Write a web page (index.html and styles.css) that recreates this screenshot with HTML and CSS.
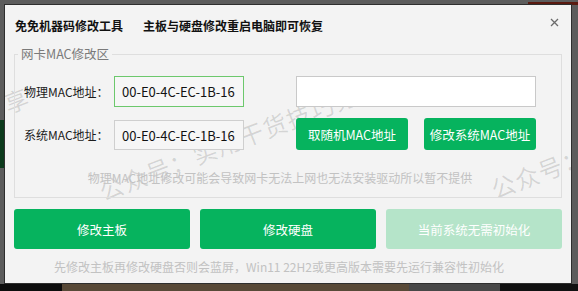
FILE: index.html
```html
<!DOCTYPE html>
<html lang="zh-CN">
<head>
    <meta charset="UTF-8">
    <meta name="viewport" content="width=device-width, initial-scale=1.0">
    <title>免免机器码修改工具</title>
    <link rel="stylesheet" href="styles.css">
</head>
<body>
    <div class="window">
        <div class="titlebar">
            <span class="app-name">免免机器码修改工具</span>
            <span class="app-note">主板与硬盘修改重启电脑即可恢复</span>
            <button class="close" type="button" aria-label="关闭">
                <svg width="9" height="9" viewBox="0 0 9 9"><path d="M1 1L8 8M8 1L1 8" stroke="#6b6b6b" stroke-width="1.3" fill="none"/></svg>
            </button>
        </div>

        <fieldset class="mac-group">
            <legend>网卡MAC修改区</legend>
            <div class="mac-row first">
                <label for="physMac">物理MAC地址：</label>
                <input class="mac-field focused" id="physMac" type="text" value="00-E0-4C-EC-1B-16">
                <input class="mac-field blank" id="newMac" type="text">
            </div>
            <div class="mac-row second">
                <label for="sysMac">系统MAC地址：</label>
                <input class="mac-field" id="sysMac" type="text" value="00-E0-4C-EC-1B-16">
                <div class="mac-actions">
                    <button class="btn" type="button">取随机MAC地址</button>
                    <button class="btn" type="button">修改系统MAC地址</button>
                </div>
            </div>
            <p class="hint">物理MAC地址修改可能会导致网卡无法上网也无法安装驱动所以暂不提供</p>
        </fieldset>

        <div class="actions">
            <button class="btn big" type="button">修改主板</button>
            <button class="btn big" type="button">修改硬盘</button>
            <button class="btn big disabled" type="button">当前系统无需初始化</button>
        </div>

        <p class="hint footer">先修改主板再修改硬盘否则会蓝屏，Win11 22H2或更高版本需要先运行兼容性初始化</p>

        <div class="watermark">
            <span class="mark m0">公众号：实用干货技巧分享</span>
            <span class="mark m1">公众号：实用干货技巧分享</span>
            <span class="mark m2">公众号：实用干货技巧分享</span>
        </div>
    </div>
</body>
</html>
```

FILE: styles.css
```css
* {
    box-sizing: border-box;
}
body {
    margin: 0;
    padding: 4px 0 0 4px;
    width: 578px;
    height: 291px;
    overflow: hidden;
    font-family: "Microsoft YaHei", "Noto Sans CJK SC", "Noto Sans", sans-serif;
    background:
        linear-gradient(#5a1a10, #5a1a10) 528px 2px / 50px 3px no-repeat,
        linear-gradient(#0d0d0d, #0d0d0d) 0 284px / 62px 7px no-repeat,
        linear-gradient(#584937, #584937) 62px 284px / 347px 7px no-repeat,
        linear-gradient(#474747, #474747) 409px 284px / 91px 7px no-repeat,
        linear-gradient(#111, #111) 500px 284px / 78px 7px no-repeat,
        linear-gradient(#0c3a1c, #0c3a1c) 0 120px / 4px 48px no-repeat,
        #5c5c5c;
}
.window {
    position: relative;
    width: 568px;
    height: 280px;
    padding: 0 9px;
    background: #f3f3f3;
    border: 1px solid #2e2e2e;
    overflow: hidden;
}
.titlebar {
    height: 40px;
    display: flex;
    align-items: center;
    font-size: 12px;
    color: #111;
    font-weight: bold;
    padding-left: 1px;
}
.app-note {
    margin-left: 20px;
}
.close {
    margin-left: auto;
    margin-right: 3px;
    margin-top: -6px;
    border: none;
    background: none;
    padding: 0;
    width: 9px;
    height: 9px;
    display: flex;
}
.mac-group {
    margin: 1px 0 0;
    padding: 14px 25px 11px 9px;
    border: 1px solid #dedede;
    font-size: 12px;
    position: relative;
    z-index: 1;
    min-width: 0;
}
.mac-group legend {
    font-size: 12.5px;
    line-height: 16px;
    color: #7a7a7a;
    padding: 0 3px;
    margin-left: -6px;
}
.mac-row {
    display: grid;
    grid-template-columns: 90px 130px 1fr;
    align-items: center;
}
.mac-row > :last-child {
    width: 240px;
    justify-self: end;
}
.mac-row.first {
    height: 31px;
}
.mac-row.second {
    height: 32px;
    margin-top: 11px;
}
.mac-row label {
    color: #1c1c1c;
}
.mac-field {
    height: 30px;
    width: 100%;
    min-width: 0;
    padding: 0 7px;
    font-family: inherit;
    font-size: 13px;
    color: #111;
    background: #f6f6f6;
    border: 1px solid #cfcfcf;
    outline: none;
}
.first .mac-field {
    height: 31px;
}
.mac-field.focused {
    border-color: #6cc86c;
}
.mac-field.blank {
    background: #fff;
    border-color: #c9c9c9;
}
.second .mac-field {
    align-self: end;
}
.mac-actions {
    display: flex;
    gap: 16px;
    height: 32px;
}
.btn {
    flex: 1;
    border: none;
    border-radius: 3px;
    background: #06b35e;
    color: #fff;
    font-family: inherit;
    font-size: 12.5px;
    white-space: nowrap;
    padding: 0;
    cursor: pointer;
}
.btn:hover {
    background: #049c51;
}
.hint {
    margin: 20px 0 0;
    line-height: 16px;
    font-size: 12px;
    color: #c2c2c2;
    text-align: center;
}
.actions {
    margin-top: 11px;
    display: grid;
    grid-template-columns: repeat(3, 1fr);
    gap: 10px;
    height: 40px;
    position: relative;
    z-index: 1;
}
.btn.big {
    font-size: 12.5px;
}
.btn.disabled {
    background: #b5e4c9;
    cursor: default;
}
.hint.footer {
    margin-top: 10px;
    padding-right: 18px;
}
.watermark {
    position: absolute;
    inset: 0;
    pointer-events: none;
    z-index: 0;
}
.mark {
    position: absolute;
    font-size: 24px;
    line-height: 24px;
    letter-spacing: 1px;
    white-space: nowrap;
    color: rgba(0, 0, 0, 0.13);
    transform-origin: 0 50%;
    transform: rotate(-21deg);
}
.m0 {
    left: -257px;
    top: 186px;
}
.m1 {
    left: 95px;
    top: 175px;
}
.m2 {
    left: 487px;
    top: 173px;
}
```
